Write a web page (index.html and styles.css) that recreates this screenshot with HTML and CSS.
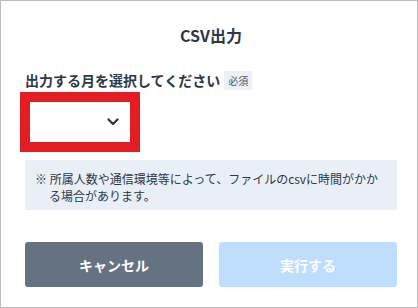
FILE: index.html
```html
<!DOCTYPE html>
<html lang="ja">
<head>
<meta charset="utf-8">
<link rel="stylesheet" href="styles.css">
</head>
<body>
<div class="modal">
  <h1 class="title">CSV出力</h1>
  <div class="label-row">
    <span class="label">出力する月を選択してください</span>
    <span class="badge">必須</span>
  </div>
  <div class="select">
    <svg class="chevron" width="12" height="8" viewBox="0 0 12 8"><path d="M1.5 1.5 L6 6 L10.5 1.5" fill="none" stroke="#2b3440" stroke-width="2.2" stroke-linecap="round" stroke-linejoin="round"/></svg>
  </div>
  <div class="note"><p class="note-text">※ 所属人数や通信環境等によって、ファイルのcsvに時間がかかる場合があります。</p></div>
  <div class="actions">
    <button class="btn btn-cancel">キャンセル</button>
    <button class="btn btn-exec">実行する</button>
  </div>
</div>
</body>
</html>
```
FILE: styles.css
```css
html, body {
  margin: 0;
  padding: 0;
  background: #fff;
}
body {
  font-family: "Noto Sans CJK JP", "Noto Sans", sans-serif;
  color: #2d3846;
}
.modal {
  box-sizing: border-box;
  width: 418px;
  height: 308px;
  border: 1px solid #bdbdbd;
  padding: 22px 20px 20px 24px;
  display: flex;
  flex-direction: column;
}
.title {
  margin: 0;
  font-size: 16px;
  line-height: 24px;
  font-weight: 700;
  text-align: center;
  color: #2d3846;
}
.label-row {
  margin-top: 23px;
  height: 20px;
  display: flex;
  align-items: center;
  gap: 4px;
}
.label {
  font-size: 14px;
  font-weight: 700;
  line-height: 20px;
}
.badge {
  background: #edf0f5;
  color: #4b5563;
  font-size: 10px;
  line-height: 19px;
  padding: 0 4px;
  height: 19px;
}
.select {
  box-sizing: border-box;
  margin-top: 2px;
  margin-left: -5px;
  width: 120px;
  height: 60px;
  border: 10px solid #e31e22;
  background: #fff;
  display: flex;
  align-items: center;
  justify-content: flex-end;
  padding-right: 11px;
}
.chevron {
  display: block;
}
.note {
  margin-top: 8px;
  background: #e9eff7;
  padding: 10px 10px 5px 24px;
  height: 50px;
  box-sizing: border-box;
}
.note-text {
  margin: 0;
  font-size: 12px;
  line-height: 17px;
  text-indent: -14px;
  color: #2d3846;
}
.actions {
  margin-top: 32px;
  display: flex;
  gap: 16px;
}
.btn {
  flex: 1;
  height: 45px;
  border: none;
  border-radius: 3px;
  font-family: "Noto Sans CJK JP", "Noto Sans", sans-serif;
  font-size: 14px;
  font-weight: 700;
  color: #fff;
  padding: 0;
}
.btn-cancel {
  background: #657282;
}
.btn-exec {
  background: #bfddfd;
}
```
